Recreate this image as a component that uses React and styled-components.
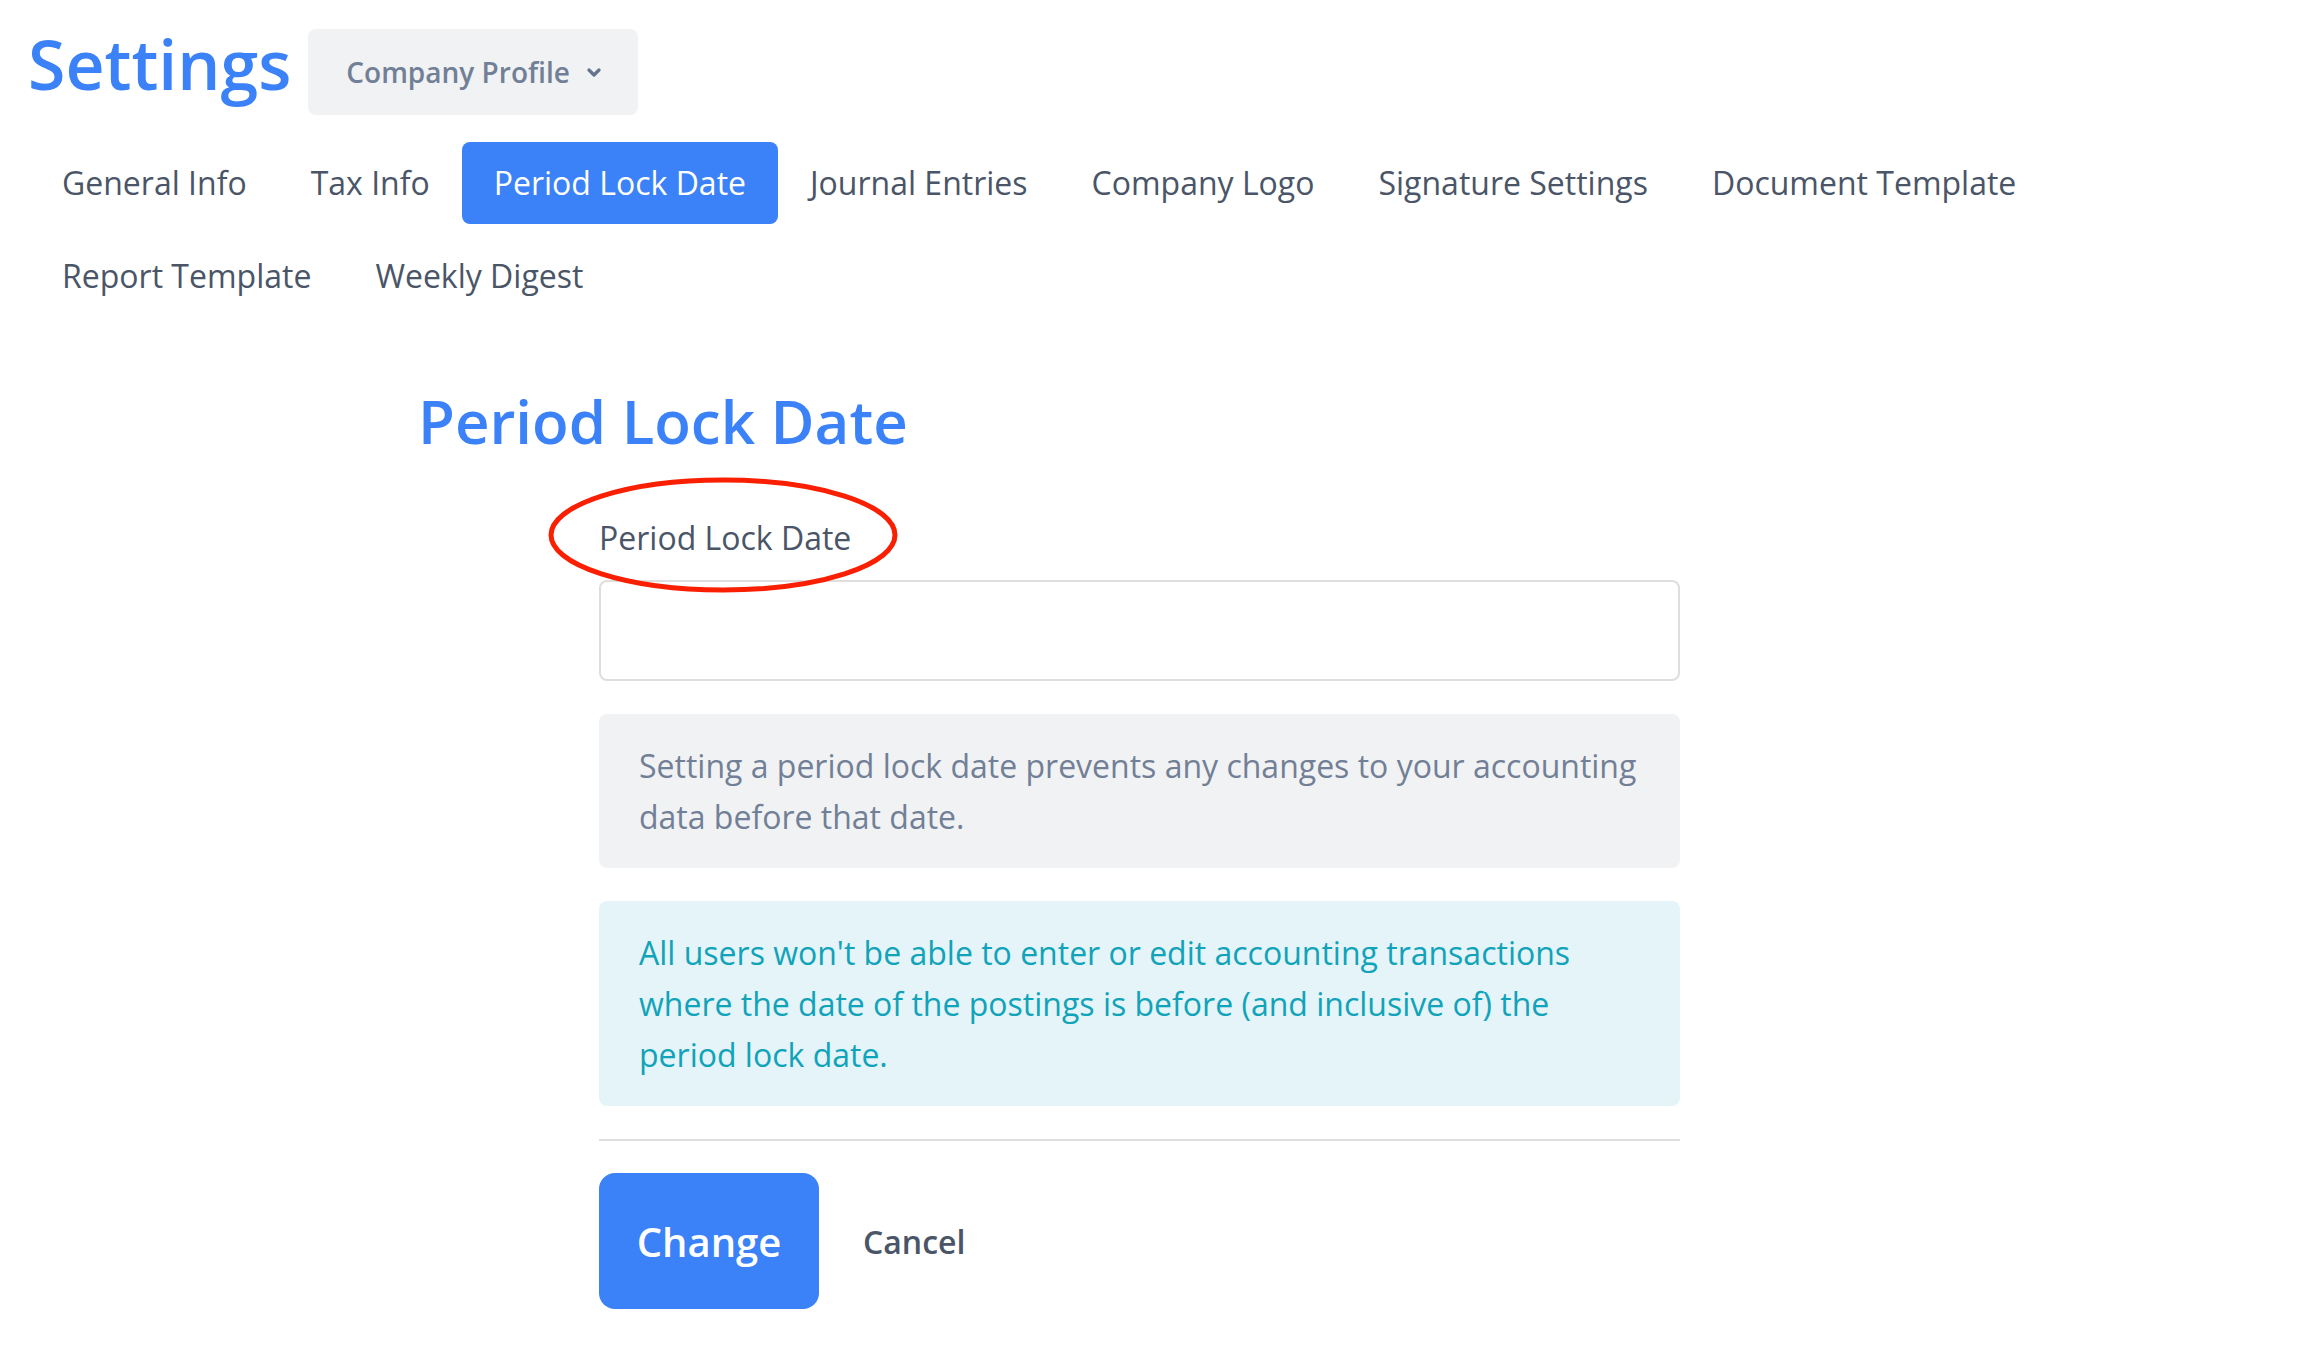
import styled, { createGlobalStyle } from "styled-components";

const GlobalStyle = createGlobalStyle`
  body {
    margin: 0;
    background: #fff;
    font-family: "Open Sans", "Liberation Sans", sans-serif;
  }
`;

const Page = styled.div`
  padding: 18px 28px 0;
`;

const HeaderRow = styled.div`
  display: flex;
  align-items: flex-start;
  gap: 17px;
`;

const Title = styled.h1`
  margin: 0;
  font-size: 68px;
  font-weight: 600;
  color: #3b81f8;
  line-height: 92px;
`;

const ProfileButton = styled.button`
  margin-top: 11px;
  height: 86px;
  display: flex;
  align-items: center;
  gap: 17px;
  padding: 0 37px 0 38px;
  border: none;
  border-radius: 8px;
  background: #f1f2f4;
  color: #718096;
  font-family: inherit;
  font-size: 28px;
  font-weight: 600;
`;

const Tabs = styled.nav`
  display: flex;
  flex-wrap: wrap;
  gap: 11px 0;
  margin-top: 27px;
  padding-left: 2px;
`;

const Tab = styled.a`
  height: 82px;
  line-height: 82px;
  padding: 0 32px;
  border-radius: 8px;
  font-size: 32px;
  color: ${(p) => (p.$active ? "#fff" : "#4a5568")};
  background: ${(p) => (p.$active ? "#3b81f8" : "transparent")};
  white-space: nowrap;
  cursor: pointer;
`;

const Heading = styled.h2`
  margin: 63px 0 0 390px;
  font-size: 60px;
  font-weight: 600;
  color: #3b81f8;
  line-height: 82px;
`;

const Form = styled.div`
  margin: 54px 0 0 571px;
  width: 1081px;
`;

const LabelWrap = styled.div`
  position: relative;
  display: inline-block;
`;

const Label = styled.label`
  font-size: 32px;
  color: #4a5568;
  line-height: 44px;
`;

const Circle = styled.svg`
  position: absolute;
  left: -51px;
  top: -39px;
  overflow: visible;
  pointer-events: none;
`;

const Input = styled.input`
  display: block;
  box-sizing: border-box;
  width: 100%;
  height: 101px;
  margin-top: 20px;
  border: 2px solid #dedede;
  border-radius: 8px;
  background: #fff;
`;

const InfoBox = styled.div`
  margin-top: 33px;
  padding: 26px 40px;
  border-radius: 8px;
  font-size: 32px;
  line-height: 51px;
  background: ${(p) => (p.$tone === "info" ? "#e4f4f8" : "#f1f2f4")};
  color: ${(p) => (p.$tone === "info" ? "#10a3b9" : "#718096")};
`;

const Divider = styled.hr`
  margin: 33px 0 0;
  border: none;
  border-top: 2px solid #dedede;
`;

const Actions = styled.div`
  display: flex;
  align-items: center;
  gap: 44px;
  margin-top: 32px;
`;

const PrimaryButton = styled.button`
  width: 220px;
  height: 136px;
  border: none;
  border-radius: 16px;
  background: #3b81f8;
  color: #fff;
  font-family: inherit;
  font-size: 40px;
  font-weight: 600;
`;

const LinkButton = styled.button`
  padding: 0;
  border: none;
  background: none;
  color: #4a5568;
  font-family: inherit;
  font-size: 32px;
  font-weight: 600;
`;

const tabs = [
  "General Info",
  "Tax Info",
  "Period Lock Date",
  "Journal Entries",
  "Company Logo",
  "Signature Settings",
  "Document Template",
  "Report Template",
  "Weekly Digest",
];

const Chevron = () => (
  <svg width="14" height="9" viewBox="0 0 14 9">
    <path
      d="M2 2l5 5 5-5"
      fill="none"
      stroke="#64748b"
      strokeWidth="3.2"
      strokeLinecap="round"
      strokeLinejoin="round"
    />
  </svg>
);

export default function App() {
  return (
    <Page>
      <GlobalStyle />
      <HeaderRow>
        <Title>Settings</Title>
        <ProfileButton>
          Company Profile
          <Chevron />
        </ProfileButton>
      </HeaderRow>

      <Tabs>
        {tabs.map((t) => (
          <Tab key={t} $active={t === "Period Lock Date"}>
            {t}
          </Tab>
        ))}
      </Tabs>

      <Heading>Period Lock Date</Heading>

      <Form>
        <LabelWrap>
          <Label>Period Lock Date</Label>
          {/* red annotation around the label */}
          <Circle width="350" height="116" viewBox="0 0 350 116">
            <ellipse
              cx="175"
              cy="58"
              rx="172"
              ry="55"
              fill="none"
              stroke="#f91f00"
              strokeWidth="5"
            />
          </Circle>
        </LabelWrap>
        <Input type="text" />
        <InfoBox>
          Setting a period lock date prevents any changes to your accounting
          data before that date.
        </InfoBox>
        <InfoBox $tone="info">
          All users won't be able to enter or edit accounting transactions
          where the date of the postings is before (and inclusive of) the
          period lock date.
        </InfoBox>
        <Divider />
        <Actions>
          <PrimaryButton>Change</PrimaryButton>
          <LinkButton>Cancel</LinkButton>
        </Actions>
      </Form>
    </Page>
  );
}
